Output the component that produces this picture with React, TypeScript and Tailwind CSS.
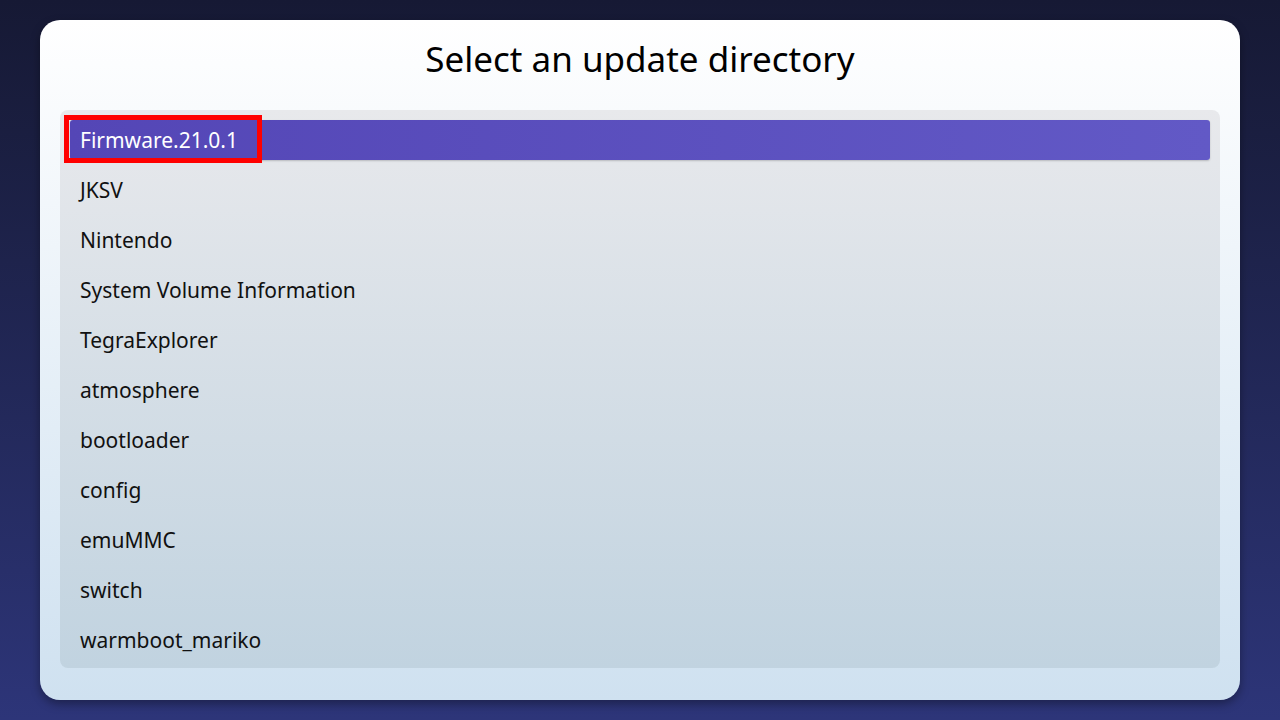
const entries = [
  "Firmware.21.0.1",
  "JKSV",
  "Nintendo",
  "System Volume Information",
  "TegraExplorer",
  "atmosphere",
  "bootloader",
  "config",
  "emuMMC",
  "switch",
  "warmboot_mariko",
];

export default function App() {
  const selected = 0;

  return (
    <div
      className="w-[1280px] h-[720px] bg-gradient-to-b from-[#161934] to-[#2d3579] px-10 pt-5 pb-5"
      style={{ fontFamily: '"Noto Sans", "Open Sans", sans-serif' }}
    >
      {/* dialog */}
      <div className="relative h-full rounded-[20px] bg-gradient-to-b from-[#ffffff] to-[#cfe1f0] shadow-[0_4px_10px_rgba(0,0,0,0.35)] px-5 pb-8 flex flex-col">
        <h1 className="h-[77px] flex items-center justify-center text-[35px] text-black leading-none">
          Select an update directory
        </h1>

        <div className="mt-[13px] flex-1 rounded-[8px] bg-gradient-to-b from-[#e8e9ec] to-[#c1d3e0] pt-[5px] px-[10px]">
          {entries.map((name, i) => (
            <div key={name} className="h-[50px] flex items-center">
              <div
                className={
                  i === selected
                    ? "w-full h-[40px] flex items-center px-[10px] rounded-[3px] bg-gradient-to-r from-[#5446b6] to-[#6259c6] text-white shadow-[0_1px_2px_rgba(0,0,0,0.2)]"
                    : "w-full h-[40px] flex items-center px-[10px] text-[#111]"
                }
              >
                <span className="text-[21px] leading-none">{name}</span>
              </div>
            </div>
          ))}
        </div>

        {/* highlight annotation */}
        <div className="absolute left-[24px] top-[95px] w-[198px] h-[48px] border-[5px] border-[#ff0000]" />
      </div>
    </div>
  );
}
